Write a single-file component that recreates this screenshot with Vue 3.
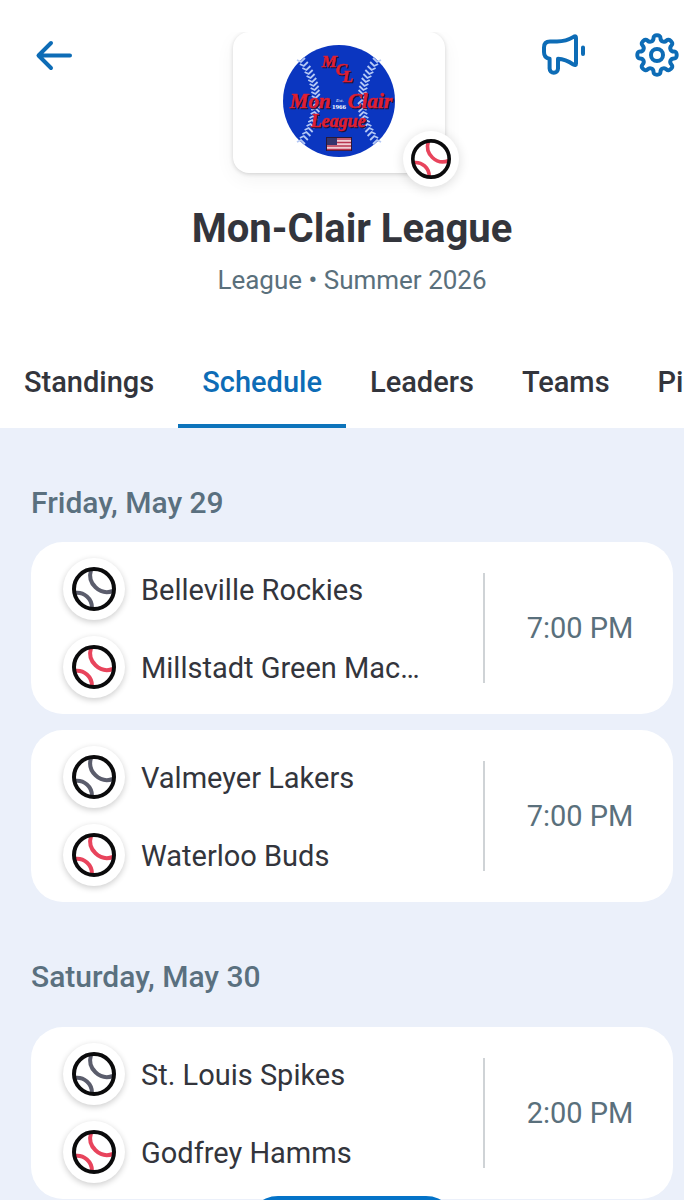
<template>
    <div class="page">
        <header class="top">
            <div class="toolbar">
                <button class="icon-btn back" type="button" aria-label="Back">
                    <svg width="38" height="32" viewBox="0 0 38 32">
                        <path d="M34 16.5H3M15 4L2.5 16.5L15 29" />
                    </svg>
                </button>

                <div class="logo-card">
                    <svg class="logo" width="114" height="114" viewBox="0 0 114 114" role="img" aria-label="Mon-Clair League">
                        <circle cx="57" cy="57" r="56" fill="#0b36c0" />
                        <path class="stitches" :d="stitches" />
                        <path class="stitches" :d="stitches" transform="translate(114 0) scale(-1 1)" />
                        <g class="script">
                            <text v-for="w in logoWords" :key="w.text" :x="w.x" :y="w.y" :font-size="w.size">{{ w.text }}</text>
                        </g>
                        <text class="est" x="54" y="58" font-size="5">Est.</text>
                        <text class="year" x="50" y="65" font-size="7">1966</text>
                        <rect x="44" y="93" width="26" height="14" fill="#2a1838" />
                        <rect x="45" y="94" width="24" height="12" fill="#f0cdd4" />
                        <path d="M45 95H69M45 98.5H69M45 102H69M45 105.5H69" stroke="#b8344f" stroke-width="1.6" />
                        <rect x="45" y="94" width="10" height="7" fill="#34356d" />
                    </svg>
                    <span class="sport">
                        <svg width="40" height="40" viewBox="-22 -22 44 44">
                            <g class="seam home">
                                <path :d="upperSeam" />
                                <path :d="lowerSeam" />
                            </g>
                            <circle class="ring" r="20" />
                        </svg>
                    </span>
                </div>

                <div class="actions">
                    <button class="icon-btn" type="button" aria-label="Announcements">
                        <svg width="46" height="42" viewBox="0 0 46 42">
                            <path d="M8 7.5H15C22 7.5 28 5 32 2.6Q34 1.6 34 4V29.5Q34 32 31.5 30.6C27 27.5 22 25 16 24.8V34.5A4.2 4.2 0 0 1 7.6 34.5V24.8Q2 24 2 18V13.5Q2 7.5 8 7.5ZM41 13.5V20" />
                        </svg>
                    </button>
                    <button class="icon-btn" type="button" aria-label="Settings">
                        <svg width="44" height="44" viewBox="-22 -22 44 44">
                            <path :d="gearPath" />
                            <circle r="6" />
                        </svg>
                    </button>
                </div>
            </div>

            <h1 class="title">Mon-Clair League</h1>
            <p class="subtitle">League • Summer 2026</p>

            <nav class="tabs">
                <a
                    v-for="tab in tabs"
                    :key="tab"
                    href="#"
                    class="tab"
                    :class="{ active: tab === activeTab }"
                    @click.prevent="activeTab = tab"
                >{{ tab }}</a>
            </nav>
        </header>

        <main class="schedule">
            <section v-for="day in days" :key="day.date" class="day">
                <h2 class="date">{{ day.date }}</h2>
                <article v-for="game in day.games" :key="game.away" class="game">
                    <div class="teams">
                        <div v-for="side in ['away', 'home']" :key="side" class="team">
                            <span class="avatar">
                                <svg width="44" height="44" viewBox="-22 -22 44 44">
                                    <g class="seam" :class="side">
                                        <path :d="upperSeam" />
                                        <path :d="lowerSeam" />
                                    </g>
                                    <circle class="ring" r="20" />
                                </svg>
                            </span>
                            <span class="name">{{ game[side] }}</span>
                        </div>
                    </div>
                    <time class="time">{{ game.time }}</time>
                </article>
            </section>
        </main>

        <button class="today" type="button" aria-label="Today"></button>
    </div>
</template>

<script setup>
import { ref } from 'vue'

const tabs = ['Standings', 'Schedule', 'Leaders', 'Teams', 'Pi']
const activeTab = ref('Schedule')

const days = [
    {
        date: 'Friday, May 29',
        games: [
            { away: 'Belleville Rockies', home: 'Millstadt Green Machine', time: '7:00 PM' },
            { away: 'Valmeyer Lakers', home: 'Waterloo Buds', time: '7:00 PM' }
        ]
    },
    {
        date: 'Saturday, May 30',
        games: [
            { away: 'St. Louis Spikes', home: 'Godfrey Hamms', time: '2:00 PM' }
        ]
    }
]

const logoWords = [
    { text: 'M', x: 40, y: 23, size: 17 },
    { text: 'C', x: 54, y: 31, size: 17 },
    { text: 'L', x: 61, y: 38, size: 17 },
    { text: 'Mon', x: 8, y: 64, size: 21 },
    { text: 'Clair', x: 66, y: 64, size: 21 },
    { text: 'League', x: 29, y: 83, size: 18 }
]

// small chevrons down the left side of the logo ball
const makeStitches = () => {
    let d = ''
    for (let i = 0; i <= 20; i++) {
        const y = 17 + i * 4
        const k = (y - 57) / 40
        const x = 34 - 15 * k * k
        const dir = y < 57 ? 1 : -1
        d += `M${x - 4} ${y - dir}L${x} ${y + dir}L${x + 4} ${y - dir * 3}`
    }
    return d
}

const stitches = makeStitches()

// baseball seams, drawn around 0,0
const upperSeam = 'M-3 -19A17 17 0 0 0 19 2'
const lowerSeam = 'M-19 4A15 15 0 0 1 -2 19'

// eight rounded teeth: curves run through the midpoints of a polygon
const makeGear = () => {
    const points = []
    for (let i = 0; i < 8; i++) {
        const corners = [[-13.5, 14.8], [-10, 20], [10, 20], [13.5, 14.8]]
        for (const [offset, r] of corners) {
            const a = (i * 45 + offset) * Math.PI / 180
            points.push([r * Math.sin(a), -r * Math.cos(a)])
        }
    }
    const mid = (p, q) => `${(p[0] + q[0]) / 2} ${(p[1] + q[1]) / 2}`
    let d = `M${mid(points[points.length - 1], points[0])}`
    points.forEach((p, i) => {
        d += `Q${p[0]} ${p[1]} ${mid(p, points[(i + 1) % points.length])}`
    })
    return d + 'Z'
}

const gearPath = makeGear()
</script>

<style>
body {
    background: #ebf0fa;
}
</style>

<style scoped>
.page {
    min-height: 100vh;
    overflow: hidden;
    font-family: Roboto, "Liberation Sans", sans-serif;
    color: #33353c;
}

.top {
    padding-top: 32px;
    background: #fff;
}

.toolbar {
    display: grid;
    grid-template-columns: 1fr 212px 1fr;
    align-items: start;
    padding-right: 6px;
}

.icon-btn {
    display: flex;
    align-items: center;
    height: 46px;
    padding: 0;
    border: 0;
    background: none;
    cursor: pointer;
}

.icon-btn svg {
    overflow: visible;
    fill: none;
    stroke: #0d6cb6;
    stroke-width: 4;
    stroke-linecap: round;
    stroke-linejoin: round;
}

.back {
    margin-left: 36px;
}

.actions {
    display: flex;
    justify-content: flex-end;
    gap: 47px;
    margin-right: -1px;
}

.logo-card {
    position: relative;
    display: flex;
    justify-content: center;
    padding: 12px 0 15px;
    border-radius: 16px;
    background: #fff;
    box-shadow: 0 1px 4px rgba(0, 0, 0, 0.16), 0 6px 20px rgba(0, 0, 0, 0.05);
    clip-path: inset(0 -40px -40px -40px);
}

.stitches {
    fill: none;
    stroke: #b4c8f5;
    stroke-width: 1.8;
}

.script {
    font-family: "Liberation Serif", serif;
    font-weight: bold;
    font-style: italic;
    fill: #e01f33;
    stroke: #e01f33;
    stroke-width: 0.6;
    filter: drop-shadow(1px 1px 0 #1b1238);
}

.est {
    font-family: "Liberation Serif", serif;
    font-style: italic;
    fill: #fff;
}

.year {
    font-family: "Liberation Serif", serif;
    font-weight: bold;
    fill: #fff;
}

.sport {
    position: absolute;
    right: -14px;
    bottom: -14px;
    display: flex;
    align-items: center;
    justify-content: center;
    width: 56px;
    height: 56px;
    border-radius: 50%;
    background: #fff;
    box-shadow: 0 2px 12px rgba(0, 0, 0, 0.14);
}

.seam {
    fill: none;
    stroke-width: 4;
}

.away {
    stroke: #5b5d6c;
}

.home {
    stroke: #e8445c;
}

.ring {
    fill: none;
    stroke: #0b0b0c;
    stroke-width: 4;
}

.title {
    margin: 32px 0 0;
    padding-left: 20px;
    font-size: 40px;
    line-height: 48px;
    font-weight: 700;
    text-align: center;
}

.subtitle {
    margin: 11px 0 0;
    padding-left: 20px;
    font-size: 26px;
    line-height: 32px;
    text-align: center;
    color: #5a707c;
}

.tabs {
    display: flex;
    margin-top: 68px;
    overflow: hidden;
}

.tab {
    flex: none;
    padding: 0 24px 24px;
    border-bottom: 4px solid transparent;
    font-size: 29px;
    line-height: 36px;
    font-weight: 500;
    color: inherit;
    text-decoration: none;
}

.tab.active {
    border-color: #0d74bb;
    color: #0d6cb6;
}

.schedule {
    padding: 0 11px 0 31px;
}

.day {
    display: flex;
    flex-direction: column;
    gap: 16px;
    padding-top: 57px;
}

.date {
    margin: 0 0 5px;
    font-size: 30px;
    line-height: 36px;
    font-weight: 500;
    color: #5a707f;
}

.day + .day .date {
    margin-bottom: 16px;
}

.game {
    display: flex;
    align-items: center;
    padding: 16px 0;
    border-radius: 32px;
    background: #fff;
}

.teams {
    display: flex;
    flex: 1;
    flex-direction: column;
    gap: 16px;
    min-width: 0;
    padding: 0 52px 0 32px;
}

.team {
    display: flex;
    align-items: center;
    gap: 16px;
}

.avatar {
    display: flex;
    flex: none;
    align-items: center;
    justify-content: center;
    width: 62px;
    height: 62px;
    border-radius: 50%;
    background: #fff;
    box-shadow: 0 2px 6px rgba(0, 0, 0, 0.2);
}

.name {
    overflow: hidden;
    padding-top: 2px;
    font-size: 29px;
    line-height: 36px;
    white-space: nowrap;
    text-overflow: ellipsis;
}

.time {
    box-sizing: border-box;
    width: 190px;
    padding-left: 2px;
    border-left: 2px solid #cfd3d6;
    font-size: 29px;
    line-height: 110px;
    text-align: center;
    color: #5a707c;
}

.today {
    position: fixed;
    bottom: -60px;
    left: 246px;
    width: 212px;
    height: 64px;
    border: 0;
    border-radius: 32px;
    background: #0473c8;
}
</style>
